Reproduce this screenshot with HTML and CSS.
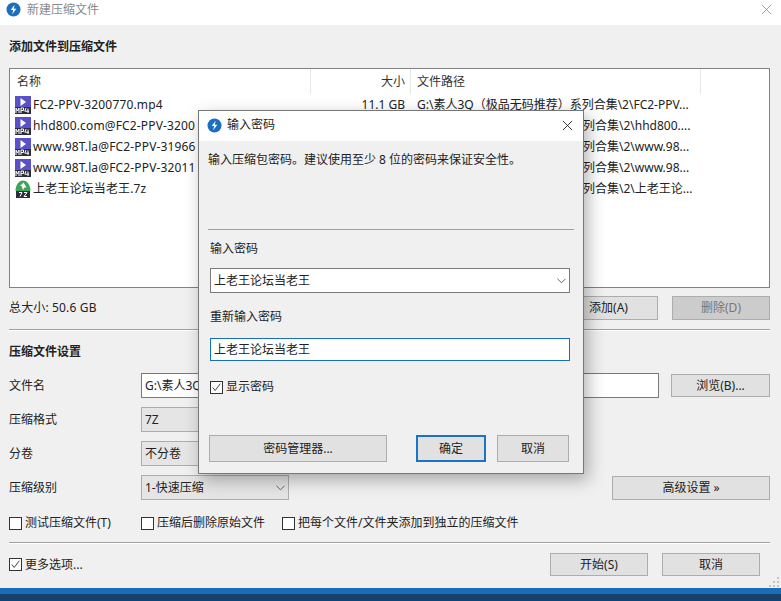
FILE: index.html
```html
<!DOCTYPE html>
<html lang="zh-CN">
  <head>
    <meta charset="UTF-8" />
    <title>新建压缩文件</title>
    <link rel="stylesheet" href="styles.css">
  </head>

  <body>
    <svg class="defs" width="0" height="0">
      <symbol id="logo" viewBox="0 0 16 16">
        <circle cx="8" cy="8" r="7.5" fill="#1b6fc0" />
        <path d="M9.200 3 5 8.600h2.700L6.600 13l4.400-5.800H8.300z" fill="#fff" />
      </symbol>
      <symbol id="mp4" viewBox="0 0 16 18">
        <rect x="0" y="0" width="16" height="18" fill="#5a50c8" />
        <path d="M5.500 2 11 6 5.500 10z" fill="#fff" />
        <rect x="0" y="11" width="16" height="7" fill="#2c2c3c" />
        <path d="M1 17v-5l1.500 3L4 12v5M6 17v-5h2.500v2.500H6M11 12l-1.200 3.200H14M13 12.500v4.500" fill="none" stroke="#fff" stroke-width="1" />
      </symbol>
      <symbol id="zip" viewBox="0 0 16 18">
        <path d="M0.500 11C0.500 5 4 0.500 8 0.500S15.500 5 15.500 11z" fill="#3fa35a" />
        <path d="M8.500 2.500 11.500 7.500H9.500L8 10 6.500 6H5z" fill="#fff" />
        <rect x="1" y="11" width="14" height="7" fill="#2c2c3c" />
        <path d="M4 12.500h3l-2 4M9 12.500h3l-3 4h3" fill="none" stroke="#fff" stroke-width="1" />
      </symbol>
      <symbol id="chevron" viewBox="0 0 10 6">
        <path d="M0.500 0.500 5 5l4.500-4.500" fill="none" stroke="#555" stroke-width="1" />
      </symbol>
      <symbol id="tick" viewBox="0 0 13 13">
        <path d="M2 6.500 5 10l6-8" fill="none" stroke="#222" stroke-width="1" />
      </symbol>
      <symbol id="cross" viewBox="0 0 12 12">
        <path d="M1 1l10 10M11 1 1 11" fill="none" stroke="currentColor" stroke-width="1" />
      </symbol>
    </svg>

    <div class="window">
      <div class="titlebar">
        <svg class="titleLogo"><use href="#logo" /></svg>
        <span class="titleText">新建压缩文件</span>
        <svg class="closeIcon"><use href="#cross" /></svg>
      </div>

      <div class="content">
        <h2 class="heading">添加文件到压缩文件</h2>

        <div class="fileList">
          <div class="listHeader">
            <div class="col colName">名称</div>
            <div class="col colSize">大小</div>
            <div class="col colPath">文件路径</div>
            <div class="col colRest"></div>
          </div>
          <div class="listRow">
            <div class="cellName"><svg class="fileIcon"><use href="#mp4" /></svg>FC2-PPV-3200770.mp4</div>
            <div class="cellSize">11.1 GB</div>
            <div class="cellPath">G:\素人3Q（极品无码推荐）系列合集\2\FC2-PPV...</div>
          </div>
          <div class="listRow">
            <div class="cellName"><svg class="fileIcon"><use href="#mp4" /></svg>hhd800.com@FC2-PPV-3200</div>
            <div class="cellSize"></div>
            <div class="cellPath pathTail">列合集\2\hhd800....</div>
          </div>
          <div class="listRow">
            <div class="cellName"><svg class="fileIcon"><use href="#mp4" /></svg>www.98T.la@FC2-PPV-31966</div>
            <div class="cellSize"></div>
            <div class="cellPath pathTail">列合集\2\www.98...</div>
          </div>
          <div class="listRow">
            <div class="cellName"><svg class="fileIcon"><use href="#mp4" /></svg>www.98T.la@FC2-PPV-32011</div>
            <div class="cellSize"></div>
            <div class="cellPath pathTail">列合集\2\www.98...</div>
          </div>
          <div class="listRow">
            <div class="cellName"><svg class="fileIcon"><use href="#zip" /></svg>上老王论坛当老王.7z</div>
            <div class="cellSize"></div>
            <div class="cellPath pathTail">列合集\2\上老王论...</div>
          </div>
        </div>

        <div class="summaryRow">
          <span class="totalSize">总大小: 50.6 GB</span>
          <div class="button addButton">添加(A)</div>
          <div class="button deleteButton">删除(D)</div>
        </div>

        <div class="separator"></div>

        <h2 class="heading settingsHeading">压缩文件设置</h2>

        <div class="settingsGrid">
          <label>文件名</label>
          <div class="fileRow">
            <div class="textField">G:\素人3Q</div>
            <div class="button browseButton">浏览(B)...</div>
          </div>
          <label>压缩格式</label>
          <div class="selectBox">7Z<svg class="chevron"><use href="#chevron" /></svg></div>
          <label>分卷</label>
          <div class="selectBox">不分卷<svg class="chevron"><use href="#chevron" /></svg></div>
          <label>压缩级别</label>
          <div class="levelRow">
            <div class="selectBox">1-快速压缩<svg class="chevron"><use href="#chevron" /></svg></div>
            <div class="button advancedButton">高级设置 »</div>
          </div>
        </div>

        <div class="optionsRow">
          <div class="checkItem optTest"><span class="checkBox"></span>测试压缩文件(T)</div>
          <div class="checkItem optDelete"><span class="checkBox"></span>压缩后删除原始文件</div>
          <div class="checkItem"><span class="checkBox"></span>把每个文件/文件夹添加到独立的压缩文件</div>
        </div>

        <div class="separator bottomSeparator"></div>

        <div class="footerRow">
          <div class="checkItem"><span class="checkBox"><svg><use href="#tick" /></svg></span>更多选项...</div>
          <div class="button startButton">开始(S)</div>
          <div class="button cancelButton">取消</div>
        </div>
      </div>

      <svg class="grip" width="10" height="10">
        <path d="M8 0h2v2H8zM4 4h2v2H4zM8 4h2v2H8zM0 8h2v2H0zM4 8h2v2H4zM8 8h2v2H8z" fill="#c4c4c4" />
      </svg>
    </div>

    <div class="taskbar"></div>

    <div class="dialog">
      <div class="dialogTitle">
        <svg class="titleLogo"><use href="#logo" /></svg>
        <span>输入密码</span>
        <svg class="closeIcon dialogClose"><use href="#cross" /></svg>
      </div>
      <div class="dialogBody">
        <p class="hint">输入压缩包密码。建议使用至少 8 位的密码来保证安全性。</p>
        <div class="dialogLine"></div>
        <div class="fieldLabel firstLabel">输入密码</div>
        <div class="passwordSelect">上老王论坛当老王<svg class="chevron"><use href="#chevron" /></svg></div>
        <div class="fieldLabel">重新输入密码</div>
        <div class="passwordInput">上老王论坛当老王</div>
        <div class="checkItem showPassword"><span class="checkBox"><svg><use href="#tick" /></svg></span>显示密码</div>
        <div class="dialogButtons">
          <div class="button managerButton">密码管理器...</div>
          <div class="button okButton">确定</div>
          <div class="button dialogCancel">取消</div>
        </div>
      </div>
    </div>
  </body>
</html>
```

FILE: styles.css
```css
html,
body {
  margin: 0;
  height: 601px;
  overflow: hidden;
}

body {
  background-color: #f0f0f0;
  color: #222;
  font-family: "Noto Sans", "Noto Sans CJK SC", sans-serif;
  font-size: 12px;
  line-height: 16px;
}

.defs {
  position: absolute;
}

.window {
  height: 588px;
  display: flex;
  flex-direction: column;
  position: relative;
}

.titlebar {
  height: 25px;
  box-sizing: border-box;
  flex: none;
  display: flex;
  align-items: center;
  background-color: #fff;
  padding: 0 9px 6px 6px;
}

.titleLogo {
  width: 15px;
  height: 15px;
  margin-right: 6px;
  flex: none;
}

.titleText {
  color: #8a8a8a;
  flex: 1;
}

.closeIcon {
  width: 11px;
  height: 11px;
  color: #9a9a9a;
}

.content {
  padding: 0 11px 0 9px;
}

.heading {
  margin: 14px 0 13px;
  font-size: 12px;
  line-height: 16px;
  font-weight: 700;
}

.fileList {
  height: 220px;
  box-sizing: border-box;
  border: 1px solid #828282;
  background-color: #fff;
}

.listHeader {
  display: grid;
  grid-template-columns: 301px 100px 290px 1fr;
  height: 25px;
  color: #333;
}

.col {
  line-height: 25px;
  padding: 0 6px;
  border-right: 1px solid #e6e6e6;
}

.colName {
  padding-left: 7px;
}

.colSize {
  text-align: right;
  padding-right: 5px;
}

.colRest {
  border-right: none;
}

.listRow {
  display: grid;
  grid-template-columns: 301px 100px 290px 1fr;
  height: 21px;
  align-items: center;
}

.cellName {
  display: flex;
  align-items: center;
  padding-left: 5px;
  white-space: nowrap;
  overflow: hidden;
  letter-spacing: 0.15px;
}

.fileIcon {
  width: 16px;
  height: 18px;
  margin-right: 2px;
  flex: none;
}

.cellSize {
  text-align: right;
  padding-right: 6px;
}

.cellPath {
  grid-column: 3 / 5;
  padding-left: 6px;
  white-space: nowrap;
}

.pathTail {
  padding-left: 172px;
}

.summaryRow {
  display: flex;
  align-items: center;
  margin-top: 8px;
  height: 24px;
}

.totalSize {
  flex: 1;
  letter-spacing: 0.15px;
}

.button {
  box-sizing: border-box;
  display: flex;
  align-items: center;
  justify-content: center;
  height: 24px;
  background-color: #e1e1e1;
  border: 1px solid #adadad;
  color: #222;
}

.addButton {
  width: 99px;
}

.deleteButton {
  width: 98px;
  margin-left: 14px;
  color: #777;
  background-color: #ccc;
}

.separator {
  margin-top: 9px;
  border-top: 1px solid #a0a0a0;
  border-bottom: 1px solid #fff;
}

.settingsHeading {
  margin: 13px 0 13px;
}

.settingsGrid {
  display: grid;
  grid-template-columns: 132px 1fr;
  grid-auto-rows: 25px;
  row-gap: 9px;
  align-items: center;
}

.fileRow,
.levelRow {
  display: flex;
  align-items: center;
  justify-content: space-between;
}

.textField {
  box-sizing: border-box;
  width: 518px;
  height: 25px;
  line-height: 23px;
  padding: 0 3px;
  background-color: #fff;
  border: 1px solid #7a7a7a;
}

.browseButton {
  width: 99px;
  height: 23px;
}

.selectBox {
  box-sizing: border-box;
  width: 148px;
  height: 25px;
  line-height: 23px;
  padding: 0 3px;
  display: flex;
  justify-content: space-between;
  align-items: center;
  background-color: #e5e5e5;
  border: 1px solid #adadad;
}

.chevron {
  width: 9px;
  height: 6px;
}

.advancedButton {
  width: 158px;
}

.optionsRow {
  display: flex;
  margin-top: 15px;
  height: 16px;
}

.checkItem {
  display: flex;
  align-items: center;
  white-space: nowrap;
}

.checkBox {
  box-sizing: border-box;
  display: block;
  width: 13px;
  height: 13px;
  margin-right: 3px;
  background-color: #fff;
  border: 1px solid #333;
}

.checkBox svg {
  display: block;
  width: 11px;
  height: 11px;
}

.optTest {
  width: 132px;
}

.optDelete {
  width: 141px;
}

.bottomSeparator {
  margin-top: 11px;
}

.footerRow {
  display: flex;
  align-items: center;
  height: 23px;
  margin-top: 9px;
  padding-right: 10px;
}

.footerRow .checkItem {
  flex: 1;
}

.startButton,
.cancelButton {
  width: 98px;
  height: 23px;
}

.cancelButton {
  margin-left: 14px;
}

.grip {
  position: absolute;
  right: 2px;
  bottom: 1px;
}

.taskbar {
  height: 13px;
  background: linear-gradient(#1a6db6 0, #1a6db6 6px, #17406a 6px);
}

.dialog {
  position: absolute;
  left: 198px;
  top: 110px;
  width: 386px;
  height: 364px;
  box-sizing: border-box;
  background-color: #f0f0f0;
  border: 1px solid #777;
  box-shadow: 4px 6px 16px rgba(0, 0, 0, 0.3);
}

.dialogTitle {
  display: flex;
  align-items: center;
  height: 30px;
  box-sizing: border-box;
  padding: 0 10px 2px 8px;
  background-color: #fff;
}

.dialogTitle .titleLogo {
  margin-right: 5px;
}

.dialogTitle span {
  flex: 1;
}

.dialogClose {
  color: #222;
}

.dialogBody {
  padding: 0 9px;
}

.hint {
  margin: 11px 0 0;
  height: 52px;
}

.dialogLine {
  margin-top: 25px;
  border-top: 1px solid #a0a0a0;
}

.fieldLabel {
  margin: 16px 0 0 2px;
}

.firstLabel {
  margin-top: 11px;
}

.passwordSelect,
.passwordInput {
  box-sizing: border-box;
  margin: 0 0 0 2px;
  width: 360px;
  padding: 0 3px;
  background-color: #fff;
}

.passwordSelect {
  display: flex;
  justify-content: space-between;
  align-items: center;
  margin-top: 11px;
  height: 25px;
  border: 1px solid #7a7a7a;
}

.passwordInput {
  margin-top: 13px;
  height: 23px;
  line-height: 21px;
  border: 1px solid #1a6fb8;
}

.showPassword {
  margin: 18px 0 0 2px;
}

.dialogButtons {
  display: flex;
  margin: 40px 0 0 1px;
}

.dialogButtons .button {
  height: 27px;
}

.managerButton {
  width: 178px;
}

.okButton {
  width: 70px;
  margin-left: 29px;
  border: 2px solid #1a73c4 !important;
}

.dialogCancel {
  width: 72px;
  margin-left: 11px;
}
```
